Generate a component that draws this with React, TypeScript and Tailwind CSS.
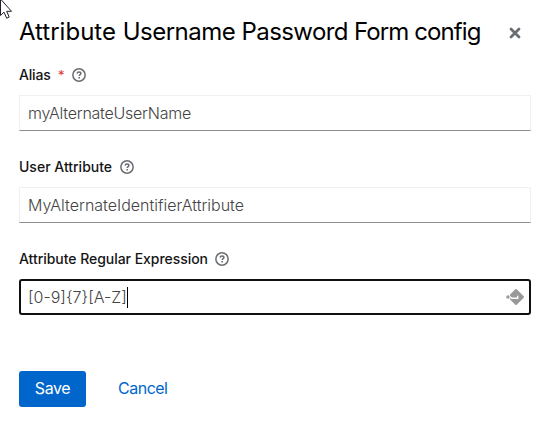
import React from 'react';

function HelpIcon() {
  return (
    <svg className="h-[14px] w-[14px] shrink-0" viewBox="0 0 14 14" fill="none" stroke="#6a6e73">
      <circle cx="7" cy="7" r="6.15" strokeWidth="1.5" />
      <path d="M5.1 5.6C5.2 4.4 6 3.9 7 3.9C8.1 3.9 8.9 4.5 8.9 5.4C8.9 6.6 7.2 6.7 7.2 8.1" strokeWidth="1.5" />
      <path d="M7.2 8.9V10.4" strokeWidth="1.6" />
    </svg>
  );
}

function CloseIcon() {
  return (
    <svg className="h-3 w-3" viewBox="0 0 12 12" stroke="#6a6e73" strokeWidth="2.8" strokeLinecap="round">
      <path d="M2 2L10 10M10 2L2 10" />
    </svg>
  );
}

function FillIcon() {
  return (
    <svg className="h-[18px] w-[19px]" viewBox="0 0 19 18">
      <circle cx="2" cy="9" r="1.8" fill="#999" />
      <path d="M10 2L17 9L10 16L5 11V7Z" fill="#999" stroke="#999" strokeWidth="2" strokeLinejoin="round" />
      <path d="M3.8 8.6L5.6 10.3H11.7V7.7" fill="none" stroke="white" strokeWidth="1.4" />
    </svg>
  );
}

interface FieldProps {
  label: string;
  labelClass: string;
  value: string;
  valueClass: string;
  required?: boolean;
  active?: boolean;
}

function Field({ label, labelClass, value, valueClass, required, active }: FieldProps) {
  return (
    <div className="flex h-[92px] flex-col">
      <div className="flex h-7 items-start text-sm leading-[16px] font-medium text-[#151515]">
        <span className={`shrink-0 whitespace-nowrap ${labelClass}`}>{label}</span>
        {required && <span className="mr-[8px] w-[6px] text-[13px] font-normal text-[#e0352b]">*</span>}
        <span className="pt-[1px]"><HelpIcon /></span>
      </div>
      <div className={`flex h-9 shrink-0 items-center bg-white ${active ? 'rounded-[3px] border-2 border-[#101010] pr-[4px] pl-[7px]' : 'border border-[#f0f0f0] border-b-[#8a8d90] px-2'}`}>
        <span className={`text-base font-light whitespace-nowrap text-[#444] ${valueClass}`}>{value}</span>
        {active && <span className="h-[21px] w-px bg-black" />}
        {active && <span className="ml-auto"><FillIcon /></span>}
      </div>
    </div>
  );
}

export default function App() {
  return (
    <main className="relative h-[423px] w-[551px] overflow-hidden bg-white px-[19px] pr-[20px] pt-4 font-['Inter',sans-serif]">
      <svg className="absolute top-0 left-0 h-[20px] w-[13px]" viewBox="0 0 13 20">
        <path d="M.5 -1V15.5L4 12.2L6.7 18.2L9.2 17.1L6.7 11.3H11.5Z" fill="white" stroke="#20202c" />
      </svg>
      <header className="flex h-[51px] items-start justify-between">
        <h1 className="text-2xl leading-[31px] whitespace-nowrap text-black">
          <span className="tracking-[0px]">Attribute </span>
          <span className="tracking-[-0.5px]">Username </span>
          <span className="tracking-[-0.6px]">Password </span>
          <span className="tracking-[-0.9px]">Form </span>
          <span className="tracking-[-0.9px]">config</span>
        </h1>
        <button aria-label="Close" className="mt-[11px] mr-[10px]"><CloseIcon /></button>
      </header>
      <form>
        <Field label="Alias" labelClass="w-[39px] tracking-[-0.2px]" value="myAlternateUserName" valueClass="tracking-[-0.25px]" required />
        <Field label="User Attribute" labelClass="w-[101px]" value="MyAlternateIdentifierAttribute" valueClass="tracking-[0px]" />
        <Field label="Attribute Regular Expression" labelClass="w-[196px] tracking-[-0.04px]" value="[0-9]{7}[A-Z]" valueClass="w-[99px]" active />
      </form>
      <footer className="mt-7 flex h-9 items-center">
        <button type="button" className="h-9 w-[67px] rounded-[3px] bg-[#0066cc] pb-0.5 text-base tracking-[-0.4px] text-white">Save</button>
        <button type="button" className="ml-8 pb-0.5 text-base tracking-[-0.5px] text-[#0066cc]">Cancel</button>
      </footer>
    </main>
  );
}
